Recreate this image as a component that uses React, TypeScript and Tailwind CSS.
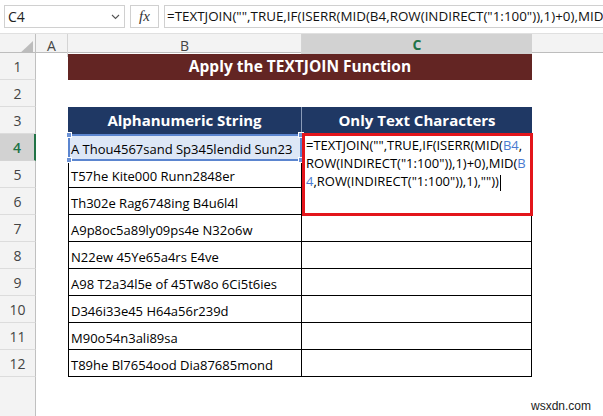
import React from 'react';

const rows: string[] = [
  'T57he Kite000 Runn2848er',
  'Th302e Rag6748ing B4u6l4l',
  'A9p8oc5a89ly09ps4e N32o6w',
  'N22ew 45Ye65a4rs E4ve',
  'A98 T2a34l5e of 45Tw8o 6Ci5t6ies',
  'D346i33e45 H64a56r239d',
  'M90o54n3ali89sa',
  'T89he Bl7654ood Dia87685mond',
];

const cols = 'grid grid-cols-[36px_32px_234px_230px_1fr]';

const RowHead: React.FC<{ n: number; active?: boolean }> = ({ n, active }) => (
  <div
    className={
      active
        ? 'flex items-center justify-center bg-[#d2d2d2] text-[#217346] font-semibold border-r-2 border-r-[#217346] border-b border-b-[#d4d4d4] text-[14px]'
        : 'flex items-center justify-center bg-[#f3f3f3] text-[#444] border-r border-r-[#c0c0c0] border-b border-b-[#dcdcdc] text-[14px]'
    }
  >
    {n}
  </div>
);

const Handle: React.FC<{ className: string }> = ({ className }) => (
  <div className={'absolute w-[6px] h-[6px] bg-[#6d93d6] border border-white ' + className} />
);

export default function App() {
  return (
    <div
      className="w-[603px] h-[416px] overflow-hidden bg-white relative text-black"
      style={{ fontFamily: '"Open Sans", "Noto Sans", sans-serif' }}
    >
      {/* formula bar */}
      <div className="h-[33px] flex items-center gap-[5px] pl-[4px] bg-white">
        <div className="w-[121px] h-[23px] border border-[#d0d0d0] flex items-center justify-between px-[3px] text-[14px] text-[#222]">
          <span>C4</span>
          <svg width="9" height="6" viewBox="0 0 9 6" className="mr-[1px]">
            <path d="M1 1l3.5 3.5L8 1" fill="none" stroke="#555" strokeWidth="1.1" />
          </svg>
        </div>
        <div className="w-[29px] h-[23px] border border-[#d0d0d0] flex items-center justify-center">
          <span className="italic text-[15px] text-[#333]" style={{ fontFamily: '"Liberation Serif", serif' }}>
            fx
          </span>
        </div>
        <div className="flex-1 h-[23px] border border-[#d0d0d0] border-r-0 flex items-center pl-[2px] text-[13.4px] text-[#111] whitespace-nowrap overflow-hidden">
          =TEXTJOIN("",TRUE,IF(ISERR(MID(B4,ROW(INDIRECT("1:100")),1)+0),MID(
        </div>
      </div>

      {/* column headers */}
      <div className={cols + ' h-[20px] text-[14px] text-[#444] bg-[#f3f3f3] border-t border-t-[#e0e0e0] border-b border-b-[#bdbdbd]'}>
        <div className="relative border-r border-r-[#c0c0c0]">
          <svg width="16" height="15" viewBox="0 0 16 15" className="absolute right-[2px] bottom-[1px]">
            <path d="M16 0V15H0Z" fill="#bcbcbc" />
          </svg>
        </div>
        <div className="flex items-center justify-center border-r border-r-[#d4d4d4]">A</div>
        <div className="flex items-center justify-center border-r border-r-[#d4d4d4]">B</div>
        <div className="flex items-center justify-center bg-[#d2d2d2] text-[#217346] font-bold border-b-2 border-b-[#217346]">
          C
        </div>
        <div />
      </div>

      <div className="relative">
        {/* row 1 */}
        <div className={cols + ' h-[27px]'}>
          <RowHead n={1} />
          <div />
          <div className="col-span-2 bg-[#632523] mt-[1px] flex items-center justify-center text-white font-bold text-[15.5px]">
            Apply the TEXTJOIN Function
          </div>
          <div />
        </div>
        {/* row 2 */}
        <div className={cols + ' h-[27px]'}>
          <RowHead n={2} />
        </div>
        {/* row 3 */}
        <div className={cols + ' h-[27px]'}>
          <RowHead n={3} />
          <div />
          <div className="bg-[#1f3864] flex items-center justify-center text-white font-bold text-[15px] border-r border-r-[#8a9bb8]">
            Alphanumeric String
          </div>
          <div className="bg-[#1f3864] flex items-center justify-center text-white font-bold text-[15px]">
            Only Text Characters
          </div>
          <div />
        </div>
        {/* row 4 */}
        <div className={cols + ' h-[27px]'}>
          <RowHead n={4} active />
          <div />
          <div className="relative bg-[#dde7f6] border-2 border-[#5b85cf] flex items-end pb-[1px] pl-[1px] text-[13px] leading-[18px] whitespace-nowrap">
            A Thou4567sand Sp345lendid Sun23
            <Handle className="-left-[4px] -top-[4px]" />
            <Handle className="-left-[4px] -bottom-[4px]" />
            <Handle className="-right-[4px] -top-[4px]" />
            <Handle className="-right-[4px] -bottom-[4px]" />
          </div>
          <div className="border-r border-black" />
          <div />
        </div>
        {rows.map((t, i) => (
          <div key={i} className={cols + ' h-[27px]'}>
            <RowHead n={i + 5} />
            <div />
            <div className="border-l border-r border-b border-black flex items-end pb-[2px] pl-[2px] text-[13px] leading-[18px] whitespace-nowrap">
              {t}
            </div>
            <div className="border-r border-b border-black" />
            <div />
          </div>
        ))}
        <div className={cols + ' h-[39px]'}>
          <div className="bg-[#f3f3f3] border-r border-r-[#c0c0c0]" />
        </div>

        {/* C4 edit box */}
        <div className="absolute left-[302px] top-[80px] w-[231px] h-[83px] bg-white border-[3px] border-[#e3151b] pl-[1px] text-[13px] leading-[18px] whitespace-nowrap overflow-hidden">
          <div>
            =TEXTJOIN("",TRUE,IF(ISERR(MID(<span className="text-[#4a7bd0]">B4</span>,
          </div>
          <div>
            ROW(INDIRECT("1:100")),1)+0),MID(<span className="text-[#4a7bd0]">B</span>
          </div>
          <div>
            <span className="text-[#4a7bd0]">4</span>,ROW(INDIRECT("1:100")),1),""))
            <span className="inline-block w-[1px] h-[16px] bg-black align-middle ml-[1px]" />
          </div>
        </div>

        <div className="absolute right-[12px] bottom-[3px] text-[12px] leading-[14px] text-[#222]" style={{ fontFamily: '"Liberation Sans", sans-serif' }}>
          wsxdn.com
        </div>
      </div>
    </div>
  );
}
